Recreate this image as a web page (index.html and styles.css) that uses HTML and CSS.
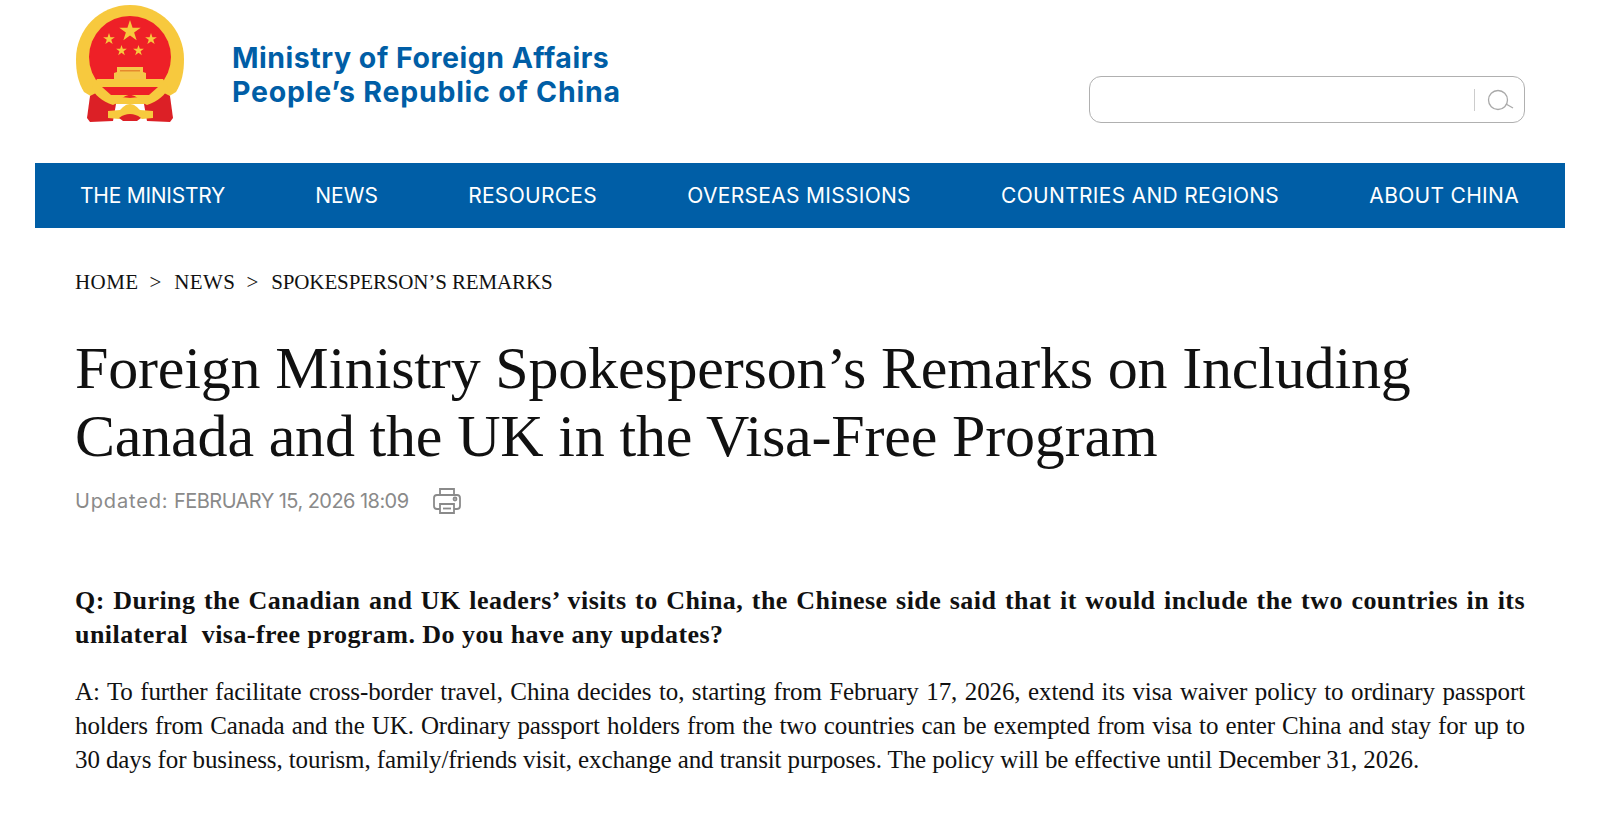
FILE: index.html
```html
<!DOCTYPE html>
<html lang="en">
  <head>
    <meta charset="UTF-8" />
    <meta name="viewport" content="width=device-width, initial-scale=1.0" />
    <title>Foreign Ministry Spokesperson's Remarks</title>
    <link rel="stylesheet" href="styles.css">
  </head>
  <body>
    <svg display="none">
      <symbol id="star" viewBox="0 0 20 20">
        <path d="M10 0l2.350 7 7.400 0-6 4.400 2.300 7.100-6.050-4.400-6.050 4.400 2.300-7.100-6-4.400 7.400 0z"></path>
      </symbol>
    </svg>

    <div class="page">
      <!-- header -->
      <header class="header">
        <div class="brand">
          <svg class="emblem" viewBox="0 0 110 120">
            <!-- gold ring -->
            <path d="M8 88C2 78 0 68 0 55 0 25 24 1 54 1s54 24 54 54c0 13-2 23-8 33l-20 12H28z" fill="#f7c93e"/>
            <circle cx="54" cy="53" r="41" fill="#ee2027"/>
            <!-- ribbons -->
            <path d="M14 92l12-6 14 14-3 17-23 1-3-4z" fill="#dc2026"/>
            <path d="M94 92l-12-6-14 14 3 17 23 1 3-4z" fill="#dc2026"/>
            <!-- stars -->
            <use href="#star" x="43" y="16" width="22" height="22" fill="#f7c93e"/>
            <use href="#star" x="27" y="29" width="12" height="12" fill="#f7c93e"/>
            <use href="#star" x="69" y="29" width="12" height="12" fill="#f7c93e"/>
            <use href="#star" x="40" y="41" width="11" height="11" fill="#f7c93e"/>
            <use href="#star" x="57" y="41" width="11" height="11" fill="#f7c93e"/>
            <!-- gate -->
            <path d="M41 63h26v5l3 1v7H38v-7l3-1z" fill="#f5c84a"/>
            <path d="M44 66h20v1.500H44z" fill="#e58a2e"/>
            <!-- band and swoop -->
            <path d="M21 75h66l5 8c-2 8-10 14-21 18l-6-3c-3-5-7-7-11-7s-8 2-11 7l-6 3C26 97 18 91 16 83z" fill="#f7c93e"/>
            <path d="M26 83h56l-9 8H35z" fill="#ee2027"/>
            <!-- bottom knot -->
            <path d="M32 107l12-1c3-3 6-6 10-6s7 3 10 6l13 1v7l-11 1-5-3H48l-5 3-11-1z" fill="#f7c93e"/>
            <path d="M43 114c4-3 7-4 11-4s7 1 11 4l-4 3H47z" fill="#dc2026"/>
          </svg>
          <div class="brand-name">
            <div class="brand-line-one">Ministry of Foreign Affairs</div>
            <div class="brand-line-two">People’s Republic of China</div>
          </div>
        </div>
        <div class="search">
          <span class="search-divider"></span>
          <svg class="search-icon" viewBox="0 0 28 24" fill="none" stroke="#a9a9a9" stroke-width="1.300">
            <circle cx="11" cy="12" r="9.500"/>
            <path d="M19 16l7 4"/>
          </svg>
        </div>
      </header>

      <!-- nav -->
      <nav class="nav">
        <a>THE MINISTRY</a>
        <a>NEWS</a>
        <a>RESOURCES</a>
        <a>OVERSEAS MISSIONS</a>
        <a>COUNTRIES AND REGIONS</a>
        <a>ABOUT CHINA</a>
      </nav>

      <main class="content">
        <div class="crumbs">
          <a>HOME</a><span class="sep">&gt;</span><a>NEWS</a><span class="sep">&gt;</span><a>SPOKESPERSON’S REMARKS</a>
        </div>

        <h1 class="title">Foreign Ministry Spokesperson’s Remarks on Including Canada and the UK in the Visa-Free Program</h1>

        <div class="meta">
          <span><span class="meta-label">Updated:</span> <span class="meta-date">FEBRUARY 15, 2026 18:09</span></span>
          <svg class="print-icon" viewBox="0 0 30 30" fill="none" stroke="#8a8a8a" stroke-width="1.800">
            <path d="M8 9V3h14v6"/>
            <path d="M8 23H5c-2 0-3-1-3-3v-8c0-2 1-3 3-3h20c2 0 3 1 3 3v8c0 2-1 3-3 3h-3"/>
            <path d="M8 18h14v9H8z"/>
            <path d="M11 22.500h8"/>
            <circle cx="23" cy="13" r="1.500"/>
          </svg>
        </div>

        <div class="article">
          <p class="question">Q: During the Canadian and UK leaders’ visits to China, the Chinese side said that it would include the two countries in its unilateral&nbsp; visa-free program. Do you have any updates?</p>
          <p class="answer">A: To further facilitate cross-border travel, China decides to, starting from February 17, 2026, extend its visa waiver policy to ordinary passport holders from Canada and the UK. Ordinary passport holders from the two countries can be exempted from visa to enter China and stay for up to 30 days for business, tourism, family/friends visit, exchange and transit purposes. The policy will be effective until December 31, 2026.</p>
        </div>
      </main>
    </div>
  </body>
</html>
```

FILE: styles.css
```css
body {
  margin: 0;
  background-color: #fff;
  color: #111;
  font-family: 'Liberation Serif', serif;
}

.page {
  width: 1530px;
  margin-left: 35px;
}

.header {
  height: 163px;
  padding: 0 40px;
  display: flex;
  justify-content: space-between;
  box-sizing: border-box;
}

.brand {
  display: flex;
  align-items: flex-start;
}

.emblem {
  width: 110px;
  height: 120px;
  margin: 4px 0 0 1px;
}

.brand-name {
  margin: 41px 0 0 46px;
  color: #005ea6;
  font: 700 28.5px/34px Inter, sans-serif;
}

.brand-line-one {
  letter-spacing: 0.53px;
}

.brand-line-two {
  letter-spacing: 0.77px;
}

.search {
  width: 436px;
  height: 47px;
  margin-top: 76px;
  border: 1px solid #b0b0b0;
  border-radius: 12px;
  box-sizing: border-box;
  display: flex;
  justify-content: flex-end;
  align-items: center;
  padding-right: 9px;
}

.search-divider {
  width: 1px;
  height: 22px;
  margin-right: 12px;
  background-color: #ccc;
}

.search-icon {
  width: 28px;
  height: 24px;
}

.nav {
  height: 65px;
  padding: 0 46px 0 45px;
  display: flex;
  justify-content: space-between;
  align-items: center;
  background-color: #005ea6;
  color: #fff;
  font: 400 21px Inter, sans-serif;
  letter-spacing: 0.3px;
}

.nav a:first-child {
  letter-spacing: -0.25px;
}

.nav a:nth-child(2) {
  letter-spacing: 0;
}

.content {
  padding: 0 40px;
}

.crumbs {
  margin-top: 42px;
  font-size: 21px;
  line-height: 24px;
}

.crumbs a {
  letter-spacing: 0.4px;
}

.crumbs a:last-child {
  letter-spacing: -0.13px;
}

.crumbs .sep {
  margin: 0 13px 0 11px;
}

.title {
  margin: 40px 0 0;
  font-size: 60px;
  font-weight: 400;
  line-height: 68px;
  letter-spacing: -0.18px;
}

.meta {
  margin-top: 16px;
  display: flex;
  align-items: center;
  gap: 23px;
  color: #8a8a8a;
  font: 400 20px/30px Inter, sans-serif;
}

.meta-label {
  letter-spacing: 0.85px;
}

.meta-date {
  letter-spacing: -0.55px;
}

.print-icon {
  width: 30px;
  height: 30px;
}

.article {
  margin-top: 68px;
  font-size: 25px;
  line-height: 34px;
  text-align: justify;
}

.article p {
  margin: 0 0 23px;
}

.question {
  font-size: 26px;
  font-weight: 700;
  letter-spacing: 0.45px;
}

.answer {
  letter-spacing: -0.1px;
}
```
